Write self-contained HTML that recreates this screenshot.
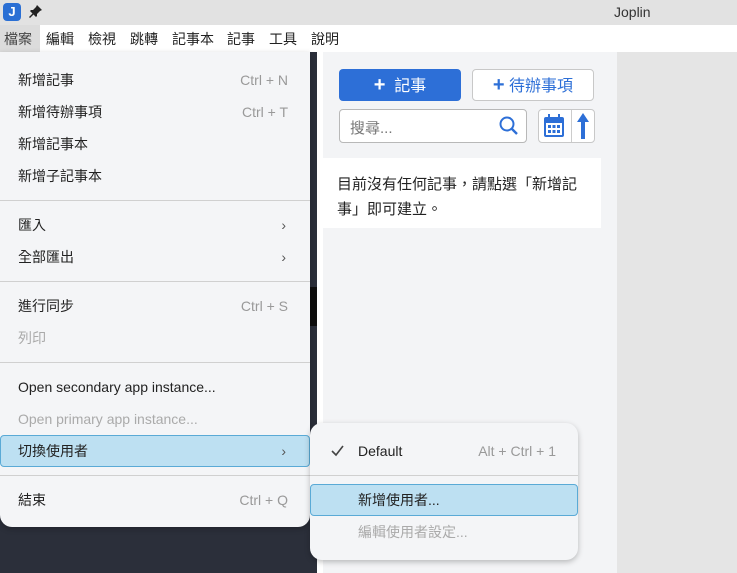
<!DOCTYPE html>
<html><head><meta charset="utf-8"><style>
*{margin:0;padding:0;box-sizing:border-box}
body{width:737px;height:573px;overflow:hidden;position:relative;background:#e5e5e5;font-family:"Liberation Sans","Noto Sans CJK TC",sans-serif;font-size:14px;color:#222}
.a{position:absolute}
.title{left:0;top:0;width:737px;height:25px;background:#e2e2e2}
.mb{left:0;top:25px;width:737px;height:27px;background:#fff}
.mb span{position:absolute;top:4px;font-size:14px;line-height:20px;color:#222}
.menu{background:#f4f5f7;border-radius:0 0 12px 12px;box-shadow:0 2px 6px rgba(0,0,0,.25)}
.it,.sc,.arr{line-height:20px;height:20px}
.it{position:absolute;left:18px;font-size:14px;color:#222}
.sc{position:absolute;right:22px;font-size:14px;color:#999}
.dis{color:#aaa}
.sep{position:absolute;left:0;right:0;height:1px;background:#d0d0d0}
.hl{position:absolute;background:#bde0f2;border:1px solid #5aaad6;border-radius:4px}
.arr{position:absolute;right:24px;color:#555;font-size:14px}
</style></head><body>
<div class="a title"></div>
<div class="a" style="left:3px;top:3px;width:18px;height:18px;background:#2a6fd4;border-radius:4px;color:#fff;font-weight:bold;font-size:13px;text-align:center;line-height:18px">J</div>
<svg class="a" style="left:29px;top:4px" width="14" height="14" viewBox="0 0 14 14"><path d="M8 1l5 5-2 1-3 3 0 2-1 1-2.5-2.5L1 14 0 13l3.5-3.5L1 7l1-1h2l3-3z" fill="#222"/></svg>
<div class="a" style="left:614px;top:4px;font-size:14px;color:#333">Joplin</div>
<div class="a mb">
<span style="left:0;top:0;height:27px;width:40px;background:#dcdcdc"></span>
<span style="left:4px;color:#444">檔案</span><span style="left:46px">編輯</span><span style="left:88px">檢視</span><span style="left:130px">跳轉</span><span style="left:172px">記事本</span><span style="left:227px">記事</span><span style="left:269px">工具</span><span style="left:311px">說明</span>
</div>
<div class="a" style="left:0;top:52px;width:317px;height:521px;background:#2b2f3a"></div>
<div class="a" style="left:300px;top:287px;width:17px;height:39px;background:#0e0e0e"></div>
<div class="a" style="left:317px;top:52px;width:6px;height:521px;background:#fff"></div>
<div class="a" style="left:323px;top:52px;width:287px;height:521px;background:#f3f4f6"></div>
<div class="a" style="left:610px;top:52px;width:7px;height:521px;background:#f3f4f6"></div>
<div class="a" style="left:339px;top:69px;width:122px;height:32px;background:#2d6fd7;border-radius:4px;color:#fff;font-size:16px;text-align:center;line-height:32px"><b style="font-size:20px">+</b>&nbsp; 記事</div>
<div class="a" style="left:472px;top:69px;width:122px;height:32px;background:#fff;border:1px solid #c8c8c8;border-radius:4px;color:#2d6fd7;font-size:16px;text-align:center;line-height:30px"><b style="font-size:20px">+</b> 待辦事項</div>
<div class="a" style="left:339px;top:109px;width:188px;height:34px;background:#fff;border:1px solid #b8b8b8;border-radius:4px;color:#777;font-size:15px;padding:7px 10px">搜尋...</div>
<svg class="a" style="left:497px;top:114px" width="24" height="24" viewBox="0 0 24 24"><circle cx="10" cy="10" r="6.5" fill="none" stroke="#2d6fd7" stroke-width="2"/><path d="M15 15l5 5" stroke="#2d6fd7" stroke-width="2.4"/></svg>
<div class="a" style="left:538px;top:109px;width:57px;height:34px;background:#fff;border:1px solid #c8c8c8;border-radius:4px"></div>
<div class="a" style="left:571px;top:110px;width:1px;height:32px;background:#ccc"></div>
<svg class="a" style="left:542px;top:113px" width="24" height="26" viewBox="0 0 24 26"><rect x="2" y="4" width="20" height="20" rx="2" fill="#2d6fd7"/><rect x="4" y="10" width="16" height="12" fill="#fff"/><rect x="6" y="1" width="2" height="5" fill="#2d6fd7"/><rect x="16" y="1" width="2" height="5" fill="#2d6fd7"/><g fill="#2d6fd7"><rect x="6" y="12" width="3" height="3"/><rect x="10.5" y="12" width="3" height="3"/><rect x="15" y="12" width="3" height="3"/><rect x="6" y="17" width="3" height="3"/><rect x="10.5" y="17" width="3" height="3"/><rect x="15" y="17" width="3" height="3"/></g></svg>
<svg class="a" style="left:576px;top:112px" width="14" height="28" viewBox="0 0 14 28"><path d="M7 1L1 10h4v17h4V10h4z" fill="#2d6fd7"/></svg>
<div class="a" style="left:323px;top:158px;width:278px;height:70px;background:#fff;padding:14px 14px;font-size:15px;line-height:25px;color:#222">目前沒有任何記事，請點選「新增記事」即可建立。</div>
<div class="a menu" style="left:0;top:52px;width:310px;height:475px">
<div class="it" style="top:18px">新增記事</div><div class="sc" style="top:18px">Ctrl + N</div>
<div class="it" style="top:50px">新增待辦事項</div><div class="sc" style="top:50px">Ctrl + T</div>
<div class="it" style="top:82px">新增記事本</div>
<div class="it" style="top:114px">新增子記事本</div>
<div class="sep" style="top:148px"></div>
<div class="it" style="top:163px">匯入</div><div class="arr" style="top:163px">›</div>
<div class="it" style="top:195px">全部匯出</div><div class="arr" style="top:195px">›</div>
<div class="sep" style="top:229px"></div>
<div class="it" style="top:244px">進行同步</div><div class="sc" style="top:244px">Ctrl + S</div>
<div class="it dis" style="top:276px">列印</div>
<div class="sep" style="top:310px"></div>
<div class="it" style="top:325px">Open secondary app instance...</div>
<div class="it dis" style="top:357px">Open primary app instance...</div>
<div class="hl" style="left:0;top:383px;width:310px;height:32px"></div>
<div class="it" style="top:389px">切換使用者</div><div class="arr" style="top:389px">›</div>
<div class="sep" style="top:423px"></div>
<div class="it" style="top:438px">結束</div><div class="sc" style="top:438px">Ctrl + Q</div>
</div>
<div class="a menu" style="left:310px;top:423px;width:268px;height:137px;border-radius:12px">
<svg class="a" style="left:21px;top:22px" width="13" height="12" viewBox="0 0 13 12"><path d="M1 6l4 4 7-9" fill="none" stroke="#444" stroke-width="1.6"/></svg>
<div class="it" style="left:48px;top:18px">Default</div><div class="sc" style="top:18px">Alt + Ctrl + 1</div>
<div class="sep" style="top:52px"></div>
<div class="hl" style="left:0;top:61px;width:268px;height:32px"></div>
<div class="it" style="left:48px;top:67px">新增使用者...</div>
<div class="it dis" style="left:48px;top:99px">編輯使用者設定...</div>
</div>
</body></html>
